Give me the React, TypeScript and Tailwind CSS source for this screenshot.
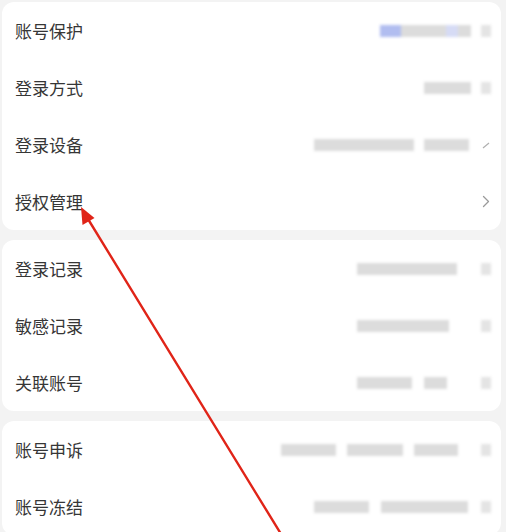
import React from 'react';

type Block = { w: number; tone?: string };
type Row = {
  label: string;
  blocks: Block[];
  gap: number;
  end: number; // space between the last block and the trailing mark
  tail: 'chevron' | 'dot' | 'slash';
};

const SECTIONS: Row[][] = [
  [
    {
      label: '账号保护',
      blocks: [{ w: 21, tone: 'bg-[#b1bdf0]' }, { w: 45 }, { w: 12, tone: 'bg-[#d6dbf5]' }, { w: 13 }],
      gap: 0,
      end: 10,
      tail: 'dot',
    },
    { label: '登录方式', blocks: [{ w: 47 }], gap: 0, end: 10, tail: 'dot' },
    { label: '登录设备', blocks: [{ w: 100 }, { w: 45 }], gap: 10, end: 12, tail: 'slash' },
    { label: '授权管理', blocks: [], gap: 0, end: 0, tail: 'chevron' },
  ],
  [
    { label: '登录记录', blocks: [{ w: 100 }], gap: 0, end: 24, tail: 'dot' },
    { label: '敏感记录', blocks: [{ w: 92 }], gap: 0, end: 32, tail: 'dot' },
    { label: '关联账号', blocks: [{ w: 55 }, { w: 23 }], gap: 12, end: 34, tail: 'dot' },
  ],
  [
    { label: '账号申诉', blocks: [{ w: 55 }, { w: 56 }, { w: 44 }], gap: 11, end: 23, tail: 'dot' },
    { label: '账号冻结', blocks: [{ w: 55 }, { w: 87 }], gap: 12, end: 13, tail: 'dot' },
  ],
];

const Trailing = ({ row }: { row: Row }) => (
  <div className="flex items-center">
    <div className="flex items-center blur-[1.5px]" style={{ gap: row.gap, marginRight: row.end }}>
      {row.blocks.map((b, i) => (
        <div key={i} className={`h-[12px] ${b.tone ?? 'bg-[#dcdcdc]'}`} style={{ width: b.w }} />
      ))}
    </div>
    <div className="flex w-[10px] items-center justify-center">
      {row.tail === 'chevron' && (
        <svg width="8" height="13" viewBox="0 0 8 13" fill="none">
          <path d="M1.5 1.5 L6.5 6.5 L1.5 11.5" stroke="#9a9a9a" strokeWidth="1.3" strokeLinecap="round" strokeLinejoin="round" />
        </svg>
      )}
      {row.tail === 'dot' && <div className="h-[12px] w-[10px] bg-[#e4e4e4] blur-[1.5px]" />}
      {row.tail === 'slash' && (
        <svg width="10" height="10" viewBox="0 0 10 10">
          <path d="M2 8 L8 3" stroke="#b0b0b0" strokeWidth="1.2" />
        </svg>
      )}
    </div>
  </div>
);

export default function App() {
  return (
    <div className="relative h-[532px] w-[506px] overflow-hidden bg-[#f3f3f3] pl-[2px] pr-[5px] pt-[2px] font-['Noto_Sans_CJK_SC','Noto_Sans',sans-serif]">
      <div className="flex flex-col gap-[10px]">
        {SECTIONS.map((rows, si) => (
          <div key={si} className="rounded-[12px] bg-white">
            {rows.map((row) => (
              <div key={row.label} className="flex h-[57px] items-center justify-between pl-[13px] pr-[10px]">
                <span className="text-[17px] leading-none text-[#363636]">{row.label}</span>
                <Trailing row={row} />
              </div>
            ))}
          </div>
        ))}
      </div>

      {/* red annotation arrow */}
      <svg className="pointer-events-none absolute inset-0" width="506" height="532" viewBox="0 0 506 532">
        <line x1="281" y1="534" x2="88" y2="219" stroke="#e02418" strokeWidth="2.4" strokeLinecap="round" />
        <polygon points="81,207 82.5,225 94.5,218" fill="#e02418" />
      </svg>
    </div>
  );
}
